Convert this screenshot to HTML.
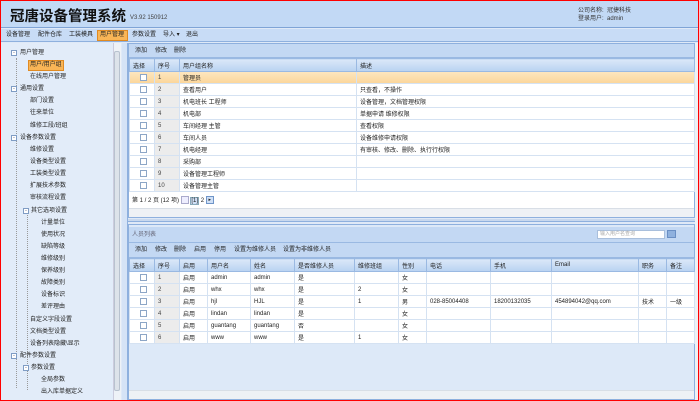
<!DOCTYPE html>
<html><head><meta charset="utf-8"><style>
*{margin:0;padding:0;box-sizing:border-box}
body{width:699px;height:401px;overflow:hidden;background:#dfe9f7;font-family:"Liberation Sans","Noto Sans CJK SC",sans-serif;font-size:6px;color:#222;position:relative}
.abs{position:absolute}
#frame{position:absolute;left:0;top:0;width:699px;height:401px;border:1px solid #f00;z-index:50;pointer-events:none}
#hdr{left:0;top:0;width:699px;height:28px;background:#c2d9f5;border-bottom:1px solid #7fa4d6}
#menu{left:0;top:29px;width:699px;height:13px;background:#c8dcf6;border-bottom:1px solid #8eb0de}
.mi{position:absolute;top:2px;font-size:6px;line-height:9px;white-space:nowrap}
#left{left:1px;top:43px;width:120px;height:357px;background:#e2ecf9;border-right:1px solid #99b5dc}
.t{position:absolute;white-space:nowrap;font-size:6px;line-height:10px}
.ib{position:absolute;width:6px;height:6px;border:1px solid #7f9cc4;background:#fff;font-size:5px;line-height:4px;text-align:center;color:#335}
.vl{position:absolute;border-left:1px dotted #999;width:1px}
table{border-collapse:collapse;table-layout:fixed}
td,th{height:12px;font-weight:normal;text-align:left;padding-left:3px;font-size:6px;white-space:nowrap;overflow:hidden;border:1px solid #d5e2f2}
th{background:linear-gradient(#dbe8f8,#b9d2f1);border-color:#9ab9e2;height:13px}
.cb{display:inline-block;width:7px;height:7px;border:1px solid #8da6c6;background:#fff;vertical-align:middle;margin-left:7px}
td.n{background:#ececec;color:#444}
.tb{background:#c3d8f3}
</style></head><body>
<div id="frame"></div>
<div id="hdr" class="abs">
 <div class="abs" style="left:10px;top:5px;font-size:14.5px;font-weight:bold;color:#111">冠唐设备管理系统</div>
 <div class="abs" style="left:130px;top:15px;font-size:6px;color:#444">V3.92 150912</div>
 <div class="abs" style="left:578px;top:7px;font-size:6px;line-height:8px;color:#333">公司名称: &nbsp;冠捷科技<br>登录用户: &nbsp;admin</div>
</div>
<div id="menu" class="abs">
 <span class="mi" style="left:6px">设备管理</span>
 <span class="mi" style="left:38px">配件仓库</span>
 <span class="mi" style="left:69px">工装模具</span>
 <span class="abs" style="left:97px;top:1px;width:31px;height:11px;background:#f9b556;border:1px solid #e08a22"></span>
 <span class="mi" style="left:100px">用户管理</span>
 <span class="mi" style="left:132px">参数设置</span>
 <span class="mi" style="left:163px">导入 ▾</span>
 <span class="mi" style="left:186px">退出</span>
</div>
<div id="left" class="abs">
 <div class="abs" style="left:112px;top:0;width:8px;height:357px;background:#eef2f7;border-left:1px solid #ccd"></div>
 <div class="abs" style="left:113px;top:8px;width:6px;height:340px;background:#dde3ea;border:1px solid #b8c2cf;border-radius:2px"></div>
</div>
<div id="tree" class="abs" style="left:0;top:0">
 <div class="vl" style="left:16px;top:58px;height:330px"></div>
 <div class="vl" style="left:27px;top:215px;height:175px"></div>
 <div class="ib" style="left:11px;top:50px">-</div><div class="t" style="left:20px;top:48px">用户管理</div>
 <div class="abs" style="left:28px;top:60px;width:36px;height:11px;background:#f9b556;border:1px solid #e08a22"></div>
 <div class="t" style="left:30px;top:60px">用户/用户组</div>
 <div class="t" style="left:30px;top:72px">在线用户管理</div>
 <div class="ib" style="left:11px;top:86px">-</div><div class="t" style="left:20px;top:84px">通用设置</div>
 <div class="t" style="left:30px;top:96px">部门设置</div>
 <div class="t" style="left:30px;top:108px">往来单位</div>
 <div class="t" style="left:30px;top:121px">维修工段/班组</div>
 <div class="ib" style="left:11px;top:135px">-</div><div class="t" style="left:20px;top:133px">设备参数设置</div>
 <div class="t" style="left:30px;top:145px">维修设置</div>
 <div class="t" style="left:30px;top:157px">设备类型设置</div>
 <div class="t" style="left:30px;top:169px">工装类型设置</div>
 <div class="t" style="left:30px;top:181px">扩展技术参数</div>
 <div class="t" style="left:30px;top:193px">审核流程设置</div>
 <div class="ib" style="left:23px;top:208px">-</div><div class="t" style="left:31px;top:206px">其它选项设置</div>
 <div class="t" style="left:41px;top:218px">计量单位</div>
 <div class="t" style="left:41px;top:230px">使用状况</div>
 <div class="t" style="left:41px;top:242px">缺陷等级</div>
 <div class="t" style="left:41px;top:254px">维修级别</div>
 <div class="t" style="left:41px;top:266px">保养级别</div>
 <div class="t" style="left:41px;top:278px">故障类别</div>
 <div class="t" style="left:41px;top:290px">设备标识</div>
 <div class="t" style="left:41px;top:302px">差评理由</div>
 <div class="t" style="left:30px;top:315px">自定义字段设置</div>
 <div class="t" style="left:30px;top:327px">文档类型设置</div>
 <div class="t" style="left:30px;top:339px">设备列表隐藏\显示</div>
 <div class="ib" style="left:11px;top:353px">-</div><div class="t" style="left:20px;top:351px">配件参数设置</div>
 <div class="ib" style="left:23px;top:365px">-</div><div class="t" style="left:31px;top:363px">参数设置</div>
 <div class="t" style="left:41px;top:375px">全局参数</div>
 <div class="t" style="left:41px;top:387px">出入库单据定义</div>
</div>
<div class="abs" style="left:122px;top:43px;width:6px;height:357px;background:#d5e3f6;border-right:1px solid #8eb0de"></div>
<div class="abs" style="left:128px;top:43px;width:567px;height:175px;background:#fff;border:1px solid #8eb0de">
 <div class="tb" style="height:14px;border-bottom:1px solid #9ab9e2;position:relative">
  <span class="mi" style="left:6px;top:3px">添加</span><span class="mi" style="left:26px;top:3px">修改</span><span class="mi" style="left:45px;top:3px">删除</span>
 </div>
 <table style="width:566px">
  <colgroup><col style="width:25px"><col style="width:25px"><col style="width:177px"><col></colgroup>
  <tr><th>选择</th><th>序号</th><th>用户组名称</th><th>描述</th></tr>
  <tr style="background:linear-gradient(#fde6bf,#fbd598)"><td><span class="cb"></span></td><td class="n" style="background:transparent">1</td><td>管理员</td><td></td></tr>
  <tr><td><span class="cb"></span></td><td class="n">2</td><td>查看用户</td><td>只查看，不操作</td></tr>
  <tr><td><span class="cb"></span></td><td class="n">3</td><td>机电班长 工程师</td><td>设备管理，文档管理权限</td></tr>
  <tr><td><span class="cb"></span></td><td class="n">4</td><td>机电部</td><td>单据申请 维修权限</td></tr>
  <tr><td><span class="cb"></span></td><td class="n">5</td><td>车间经理 主管</td><td>查看权限</td></tr>
  <tr><td><span class="cb"></span></td><td class="n">6</td><td>车间人员</td><td>设备维修申请权限</td></tr>
  <tr><td><span class="cb"></span></td><td class="n">7</td><td>机电经理</td><td>有审核、修改、删除、执行行权限</td></tr>
  <tr><td><span class="cb"></span></td><td class="n">8</td><td>采购部</td><td></td></tr>
  <tr><td><span class="cb"></span></td><td class="n">9</td><td>设备管理工程师</td><td></td></tr>
  <tr><td><span class="cb"></span></td><td class="n">10</td><td>设备管理主管</td><td></td></tr>
 </table>
 <div class="abs" style="left:3px;top:151px;white-space:nowrap">第 1 / 2 页 (12 项) <span style="display:inline-block;width:8px;height:8px;border:1px solid #aac;background:#eef;vertical-align:middle"></span> <span style="background:#cfe0f7;border:1px solid #8ab">[1]</span> 2 <span style="display:inline-block;width:8px;height:8px;border:1px solid #6f95c8;background:#cfe0f7;vertical-align:middle;font-size:5px;line-height:6px;text-align:center">▸</span></div>
 <div class="abs" style="left:0;top:164px;width:565px;height:9px;background:#eef1f5;border-top:1px solid #d8dee6"></div>
</div>
<div class="abs" style="left:128px;top:219px;width:567px;height:3px;background:#c8d8ee;border-bottom:1px solid #8eb0de"></div>
<div class="abs" style="left:128px;top:224px;width:567px;height:176px;background:#dde9f8;border:1px solid #8eb0de">
 <div class="tb" style="height:16px;border-bottom:1px solid #9ab9e2;position:relative;margin-top:2px">
  <span class="mi" style="left:3px;top:4px;color:#667">人员列表</span>
  <div class="abs" style="left:468px;top:3px;width:68px;height:9px;background:#fff;border:1px solid #a9bfdc;font-size:5px;color:#aaa;padding-left:2px;line-height:7px">输入用户名查询</div>
  <div class="abs" style="left:538px;top:3px;width:9px;height:8px;background:#8fb1de;border:1px solid #6a8fc4"></div>
 </div>
 <div class="tb" style="height:15px;border-bottom:1px solid #9ab9e2;position:relative">
  <span class="mi" style="left:6px;top:3px">添加</span><span class="mi" style="left:26px;top:3px">修改</span><span class="mi" style="left:45px;top:3px">删除</span><span class="mi" style="left:65px;top:3px">启用</span><span class="mi" style="left:85px;top:3px">停用</span><span class="mi" style="left:105px;top:3px">设置为维修人员</span><span class="mi" style="left:154px;top:3px">设置为非维修人员</span>
 </div>
 <table style="width:566px;background:#fff">
  <colgroup><col style="width:25px"><col style="width:25px"><col style="width:28px"><col style="width:43px"><col style="width:44px"><col style="width:60px"><col style="width:44px"><col style="width:28px"><col style="width:64px"><col style="width:61px"><col style="width:87px"><col style="width:28px"><col></colgroup>
  <tr><th>选择</th><th>序号</th><th>启用</th><th>用户名</th><th>姓名</th><th>是否维修人员</th><th>维修班组</th><th>性别</th><th>电话</th><th>手机</th><th>Email</th><th>职务</th><th>备注</th></tr>
  <tr><td><span class="cb"></span></td><td class="n">1</td><td>启用</td><td>admin</td><td>admin</td><td>是</td><td></td><td>女</td><td></td><td></td><td></td><td></td><td></td></tr>
  <tr><td><span class="cb"></span></td><td class="n">2</td><td>启用</td><td>whx</td><td>whx</td><td>是</td><td>2</td><td>女</td><td></td><td></td><td></td><td></td><td></td></tr>
  <tr><td><span class="cb"></span></td><td class="n">3</td><td>启用</td><td>hjl</td><td>HJL</td><td>是</td><td>1</td><td>男</td><td>028-85004408</td><td>18200132035</td><td>454894042@qq.com</td><td>技术</td><td>一级</td></tr>
  <tr><td><span class="cb"></span></td><td class="n">4</td><td>启用</td><td>lindan</td><td>lindan</td><td>是</td><td></td><td>女</td><td></td><td></td><td></td><td></td><td></td></tr>
  <tr><td><span class="cb"></span></td><td class="n">5</td><td>启用</td><td>guantang</td><td>guantang</td><td>否</td><td></td><td>女</td><td></td><td></td><td></td><td></td><td></td></tr>
  <tr><td><span class="cb"></span></td><td class="n">6</td><td>启用</td><td>www</td><td>www</td><td>是</td><td>1</td><td>女</td><td></td><td></td><td></td><td></td><td></td></tr>
 </table>
 <div class="abs" style="left:0;top:165px;width:565px;height:9px;background:#eef1f5;border-top:1px solid #d8dee6"></div>
</div>
<div class="abs" style="left:695px;top:43px;width:3px;height:357px;background:#eef1f5"></div>
</body></html>
